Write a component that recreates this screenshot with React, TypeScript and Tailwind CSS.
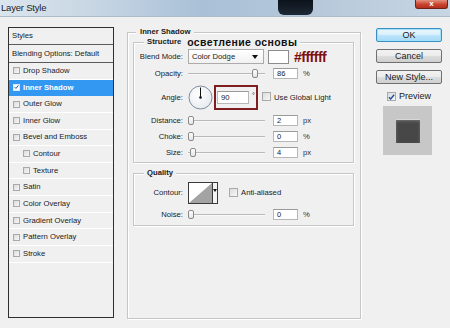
import React from "react";

function Check({ checked = false, size = 7, onBlue = false }: { checked?: boolean; size?: number; onBlue?: boolean }) {
  return (
    <span
      className={
        "inline-flex items-center justify-center shrink-0 border " +
        (onBlue ? "border-[#d8e8f8] bg-white" : "border-[#a9a9a9] bg-[linear-gradient(135deg,#dcdcdc,#f7f7f7)]")
      }
      style={{ width: size, height: size }}
    >
      {checked && (
        <svg width={size - 1} height={size - 1} viewBox="0 0 8 8">
          <path d="M1 4.2 L3.1 6.3 L7 1.4" fill="none" stroke="#1b4f9c" strokeWidth="1.6" />
        </svg>
      )}
    </span>
  );
}

function Slider({ pos }: { pos: number }) {
  return (
    <div className="relative w-[77px] h-[11px] flex items-center">
      <div className="w-full h-[2px] bg-[#b9b9b9] border-b border-[#f8f8f8]" />
      <div
        className="absolute top-[1px] w-[6px] h-[9px] rounded-[2px] border border-[#8a8a8a] bg-[linear-gradient(180deg,#ffffff,#e4e4e4)]"
        style={{ left: pos }}
      />
    </div>
  );
}

function NumInput({ value }: { value: string }) {
  return (
    <div className="w-[25px] h-[11px] bg-white border border-[#b7b7b7] border-t-[#9a9a9a] flex items-center pl-[3px] text-[7.5px]">
      {value}
    </div>
  );
}

function Label({ children }: { children: React.ReactNode }) {
  return <div className="w-[49px] text-right shrink-0">{children}</div>;
}

function SliderRow({ label, pos, value, unit }: { label: string; pos: number; value: string; unit: string }) {
  return (
    <div className="flex items-center h-[11px]">
      <Label>{label}</Label>
      <div className="ml-[5px]">
        <Slider pos={pos} />
      </div>
      <div className="ml-[8px]">
        <NumInput value={value} />
      </div>
      <div className="ml-[5px] text-[#333]">{unit}</div>
    </div>
  );
}

function Legend({ children, ml = 10 }: { children: React.ReactNode; ml?: number }) {
  return (
    <div
      className="-mt-[6px] w-fit h-[10px] px-[3px] bg-[#f0f0f0] flex items-center font-bold"
      style={{ marginLeft: ml }}
    >
      {children}
    </div>
  );
}

const groupBox = "border border-[#c6c6c6] shadow-[inset_1px_1px_0_#ffffff,1px_1px_0_#ffffff]";

function ListRow({ label, sub = false, selected = false }: { label: string; sub?: boolean; selected?: boolean }) {
  return (
    <div
      className={
        "h-[16.64px] flex items-center border-b " +
        (selected ? "bg-[#3398f2] border-[#3398f2] text-white font-bold" : "border-white")
      }
      style={{ paddingLeft: sub ? 14 : 4 }}
    >
      <Check checked={selected} onBlue={selected} />
      <span className="ml-[3px]">{label}</span>
    </div>
  );
}

function Button({ children, primary = false }: { children: React.ReactNode; primary?: boolean }) {
  return (
    <div
      className={
        "h-[14px] w-[66px] rounded-[2px] flex items-center justify-center text-[9px] " +
        (primary
          ? "border border-[#3c8fc4] bg-[linear-gradient(180deg,#eaf6fd_0%,#d9f0fc_50%,#bee6fd_51%,#a7d9f5_100%)] shadow-[inset_0_0_0_1px_#9fe0fb]"
          : "border border-[#707070] bg-[linear-gradient(180deg,#f2f2f2_0%,#ebebeb_50%,#dddddd_51%,#cfcfcf_100%)]")
      }
    >
      {children}
    </div>
  );
}

export default function App() {
  return (
    <div className="w-[450px] h-[328px] overflow-hidden bg-[#f0f0f0] font-['Liberation_Sans',Arial,sans-serif] text-[7.7px] text-[#1a1a1a] leading-none">
      {/* Title bar */}
      <div className="h-[17px] flex items-start bg-[linear-gradient(90deg,#dbe5ee_0%,#c6d5e3_22%,#a9c0d7_45%,#b7c9db_72%,#c8d6e3_100%)] border-b border-[#aebdcc]">
        <div className="w-[278px] h-[16px] flex items-center pl-[1px] text-[9.5px] tracking-[-0.2px] text-[#1e1e1e]">
          Layer Style
        </div>
        <div className="w-[35px] h-[15px] rounded-b-[6px] bg-[linear-gradient(180deg,#0c131b,#1d2936)]" />
        <div className="w-[102px]" />
        <div className="w-[33px] h-[9px] rounded-b-[3px] border border-t-0 border-[#6e2218] bg-[linear-gradient(180deg,#e3917f,#c9442f_55%,#b2301d)] flex items-center justify-center text-white text-[8px] font-bold">
          x
        </div>
      </div>

      {/* Body */}
      <div className="flex items-start pl-[8px] pt-[10px]">
        {/* Left list */}
        <div className="w-[106px] h-[291px] border border-[#2f2f2f] bg-[#f0f0f0] flex flex-col shrink-0">
          <div className="h-[17px] border-b border-[#5c5c5c] pl-[3px] flex items-center">Styles</div>
          <div className="h-[18px] border-b border-[#5c5c5c] pl-[3px] flex items-center">Blending Options: Default</div>
          <ListRow label="Drop Shadow" />
          <ListRow label="Inner Shadow" selected />
          <ListRow label="Outer Glow" />
          <ListRow label="Inner Glow" />
          <ListRow label="Bevel and Emboss" />
          <ListRow label="Contour" sub />
          <ListRow label="Texture" sub />
          <ListRow label="Satin" />
          <ListRow label="Color Overlay" />
          <ListRow label="Gradient Overlay" />
          <ListRow label="Pattern Overlay" />
          <ListRow label="Stroke" />
        </div>

        {/* Middle */}
        <div className={"ml-[13px] mt-[5px] w-[234px] h-[287px] shrink-0 " + groupBox}>
          <Legend ml={8}>
            <span className="px-[1px]">Inner Shadow</span>
          </Legend>

          {/* Structure */}
          <div className={"mt-[5px] ml-[5px] w-[221px] h-[121px] " + groupBox}>
            <Legend>
              <span>Structure</span>
              <span className="ml-[6px] text-[10.5px] tracking-[0.4px] text-[#111]">осветление основы</span>
            </Legend>

            <div className="mt-[2px] flex items-center h-[15px]">
              <Label>Blend Mode:</Label>
              <div className="ml-[5px] w-[76px] h-[15px] border border-[#acacac] bg-[linear-gradient(180deg,#ffffff,#f1f1f1)] flex items-center pl-[3px] pr-[5px]">
                <span>Color Dodge</span>
                <svg className="ml-auto" width="6" height="4" viewBox="0 0 6 4">
                  <path d="M0 0 H6 L3 4 Z" fill="#111" />
                </svg>
              </div>
              <div className="ml-[4px] w-[21px] h-[14px] bg-white border border-[#8c8c8c]" />
              <div className="ml-[5px] text-[14px] font-bold text-[#7d1010] tracking-[-0.5px]">#ffffff</div>
            </div>

            <div className="mt-[4px]">
              <SliderRow label="Opacity:" pos={64} value="86" unit="%" />
            </div>

            <div className="mt-[6px] flex items-center h-[25px]">
              <Label>Angle:</Label>
              <div className="ml-[5px] w-[25px] h-[25px]">
                <svg width="25" height="25" viewBox="0 0 25 25">
                  <defs>
                    <radialGradient id="dialg" cx="0.4" cy="0.35" r="0.8">
                      <stop offset="0" stopColor="#ffffff" />
                      <stop offset="1" stopColor="#e3e7ec" />
                    </radialGradient>
                  </defs>
                  <circle cx="12.5" cy="12.5" r="11.5" fill="url(#dialg)" stroke="#7d8da0" strokeWidth="1" />
                  <line x1="12.5" y1="12.5" x2="12.5" y2="2.5" stroke="#111" strokeWidth="1" />
                  <circle cx="12.5" cy="12.5" r="1.3" fill="#111" />
                </svg>
              </div>
              <div className="ml-[1px] w-[44px] h-[25px] border-2 border-[#7e1e1e] flex items-center">
                <div className="ml-[1px] w-[32px] h-[13px] bg-white border border-[#b7b7b7] border-t-[#9a9a9a] flex items-center pl-[3px]">
                  90
                </div>
                <span className="ml-[3px] self-start mt-[5px] text-[7px]">°</span>
              </div>
              <div className="ml-[4px]">
                <Check size={9} />
              </div>
              <span className="ml-[3px]">Use Global Light</span>
            </div>

            <div className="mt-[5px]">
              <SliderRow label="Distance:" pos={0} value="2" unit="px" />
            </div>
            <div className="mt-[5px]">
              <SliderRow label="Choke:" pos={0} value="0" unit="%" />
            </div>
            <div className="mt-[5px]">
              <SliderRow label="Size:" pos={2} value="4" unit="px" />
            </div>
          </div>

          {/* Quality */}
          <div className={"mt-[10px] ml-[5px] w-[221px] h-[53px] " + groupBox}>
            <Legend>
              <span>Quality</span>
            </Legend>
            <div className="mt-[4px] flex items-center h-[22px]">
              <Label>Contour:</Label>
              <div className="ml-[5px] w-[30px] h-[22px] border border-[#3a3a3a] flex bg-white">
                <svg width="23" height="20" viewBox="0 0 23 20" className="block">
                  <rect width="23" height="20" fill="#ffffff" />
                  <path d="M0 20 L23 0 L23 20 Z" fill="#a3a3a3" />
                </svg>
                <div className="w-[5px] h-full border-l border-[#3a3a3a] bg-[#f4f4f4] flex justify-center pt-[6px]">
                  <svg width="4" height="3" viewBox="0 0 4 3">
                    <path d="M0 0 H4 L2 3 Z" fill="#111" />
                  </svg>
                </div>
              </div>
              <div className="ml-[11px]">
                <Check size={9} />
              </div>
              <span className="ml-[3px]">Anti-aliased</span>
            </div>
            <div className="mt-[5px]">
              <SliderRow label="Noise:" pos={0} value="0" unit="%" />
            </div>
          </div>
        </div>

        {/* Right column */}
        <div className="ml-[15px] mt-[1px] w-[66px] flex flex-col shrink-0">
          <Button primary>OK</Button>
          <div className="mt-[7px]">
            <Button>Cancel</Button>
          </div>
          <div className="mt-[7px]">
            <Button>New Style...</Button>
          </div>
          <div className="mt-[8px] h-[9px] pl-[11px] flex items-center">
            <Check checked size={9} />
            <span className="ml-[3px] text-[9px]">Preview</span>
          </div>
          <div className="mt-[5px] ml-[7px] w-[49px] h-[49px] bg-[#c7c7c7] flex items-center justify-center">
            <div className="w-[24px] h-[24px] bg-[#474747] shadow-[inset_0_1px_0_#d8d8d8,inset_0_2px_3px_rgba(255,255,255,0.25)]" />
          </div>
        </div>
      </div>
    </div>
  );
}
